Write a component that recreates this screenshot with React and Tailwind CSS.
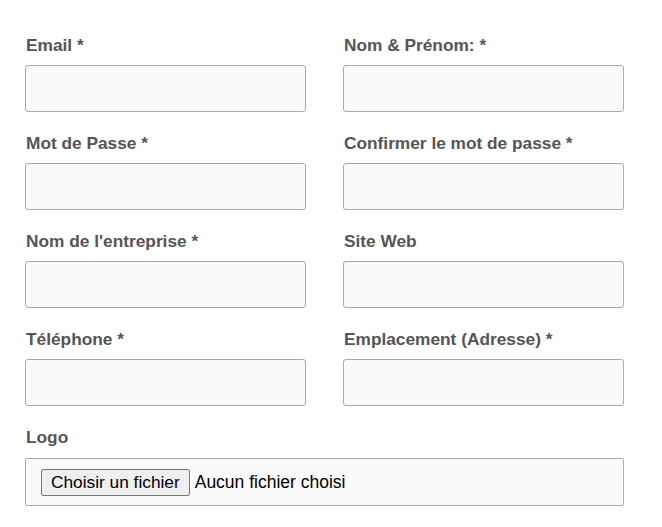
import React from "react";

const fields = [
  ["Email *", "Nom & Prénom: *"],
  ["Mot de Passe *", "Confirmer le mot de passe *"],
  ["Nom de l'entreprise *", "Site Web"],
  ["Téléphone *", "Emplacement (Adresse) *"],
];

function Field({ label }) {
  return (
    <div className="flex flex-col">
      <label className="block h-[20px] leading-[20px] font-bold text-[#555] mb-[10px] pl-px whitespace-nowrap">{label}</label>
      <div className="h-[47px] w-full rounded-[3px] border border-[#a9a9b0] bg-[#fafafa]" />
    </div>
  );
}

export default function App() {
  return (
    <div className="w-[662px] h-[527px] bg-white pt-[35px] pl-[25px] text-[17.3px]" style={{ fontFamily: '"Liberation Sans", Arial, sans-serif' }}>
      <div className="w-[599px] grid grid-cols-2 gap-x-[37px] gap-y-[21px]">
        {fields.map(([a, b]) => (
          <React.Fragment key={a}>
            <Field label={a} />
            <Field label={b} />
          </React.Fragment>
        ))}
        <div className="col-span-2 flex flex-col">
          <label className="block h-[20px] leading-[20px] font-bold text-[#555] mb-[11px] pl-px">Logo</label>
          <div className="h-[48px] w-full rounded-[2px] border border-[#a9a9b0] bg-[#fafafa] flex items-center pl-[15px]">
            <button className="h-[27px] px-[9px] bg-[#efefef] border border-[#767676] rounded-[2px] text-black leading-[20px] whitespace-nowrap">
              Choisir un fichier
            </button>
            <span className="ml-[5px] text-black whitespace-nowrap text-[17.5px]">Aucun fichier choisi</span>
          </div>
        </div>
      </div>
    </div>
  );
}
